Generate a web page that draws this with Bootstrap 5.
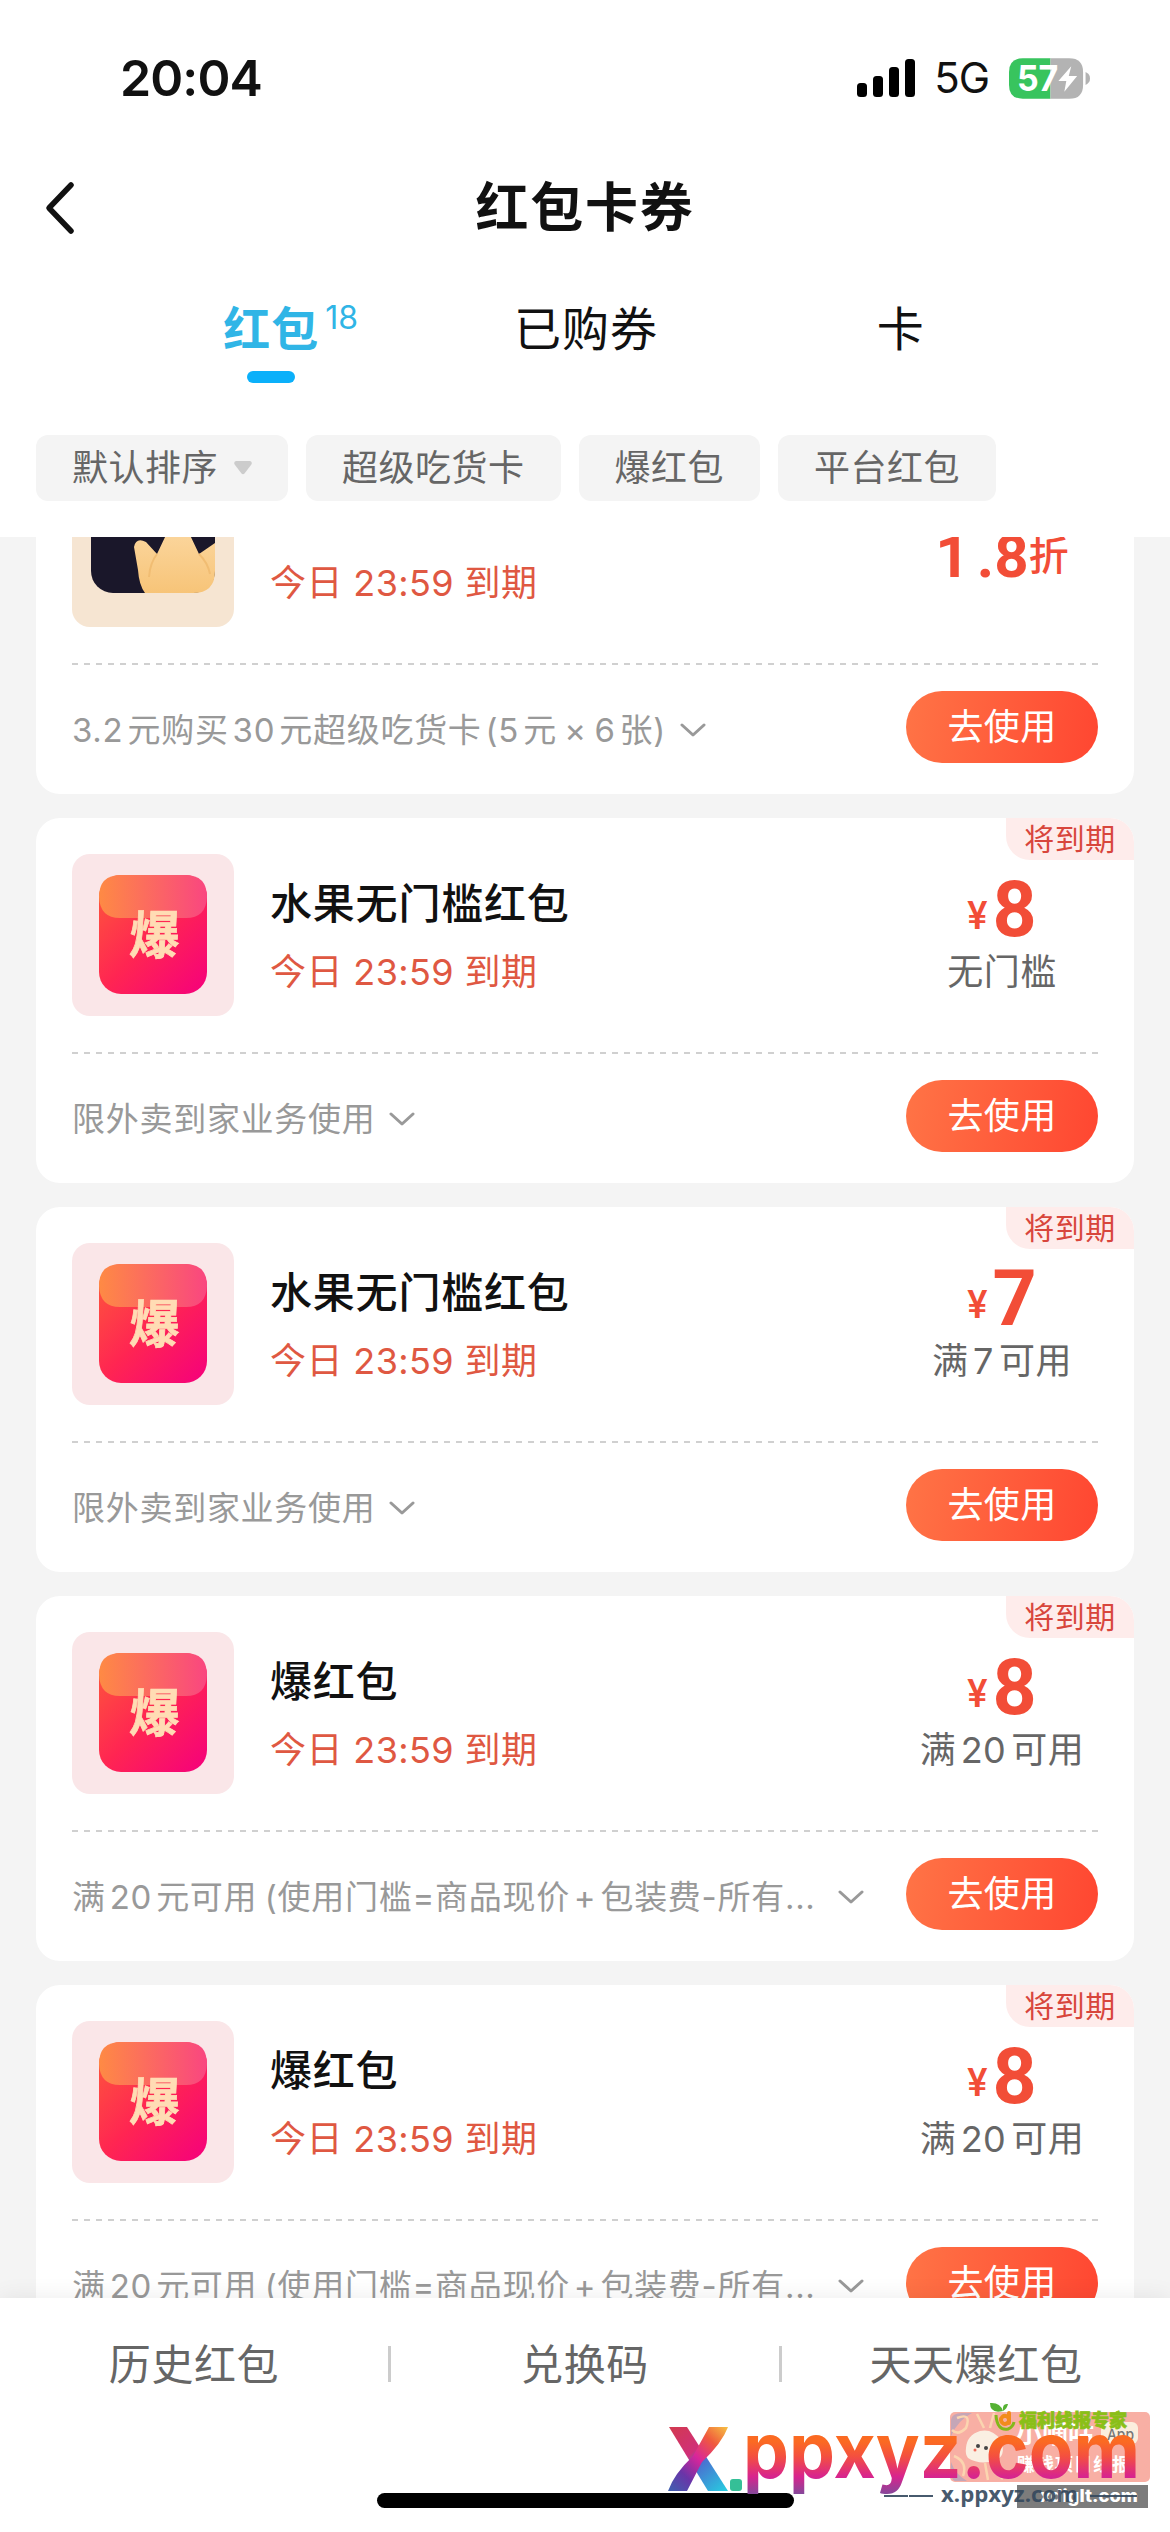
<!DOCTYPE html>
<html lang="zh-CN">
<head>
<meta charset="utf-8">
<meta name="viewport" content="width=device-width, initial-scale=1">
<title>红包卡券</title>
<link href="https://cdn.jsdelivr.net/npm/bootstrap@5.3.0/dist/css/bootstrap.min.css" rel="stylesheet">
<style>
body{font-family:Inter,"Noto Sans CJK SC",sans-serif;background:#f4f4f4;color:#111}
.screen{width:1170px;height:2532px}
.top-area{height:537px}
.status{height:116px;padding:38px 80px 0 120px}
.clock{font-size:50px;font-weight:600;line-height:80px;letter-spacing:-.9px}
.net{font-size:42px;line-height:80px;margin:0 20px 0 19px;letter-spacing:-1px}
.title-bar{height:183px}
.title-bar h1{font-size:53px;line-height:70px;font-weight:700;letter-spacing:1.8px}
.back{left:44px}
.tabs{padding:0 112px 0 114px;height:136px}
.tab{font-size:47px;line-height:60px;letter-spacing:1px}
.tab.on{color:#30b5e6;font-weight:700}
.tab .count{left:100%;top:-1px;font-size:32px;line-height:40px;margin-left:6px;font-weight:400;letter-spacing:0}
.tab .bar{left:24px;bottom:-24px;width:48px;height:12px;border-radius:6px;background:#0bb0fa}
.filters{padding:0 36px;gap:18px}
.chip{height:66px;border-radius:12px;background:#f4f4f4;color:#666;font-size:36px;letter-spacing:.5px;padding:0 36px}
.coupons{padding:0 36px;gap:24px}
.coupon{height:365px;border-radius:24px}
.coupon.first{margin-top:-108px}
.c-main{height:234px;padding:36px 36px 0}
.thumb{width:162px;height:162px;border-radius:18px;background:#fae6e8;overflow:hidden}
.thumb.gold{background:#f6e5d2}
.info{margin-left:36px;padding-top:20px}
.info h2{font-size:42px;line-height:60px;font-weight:500;letter-spacing:.8px;margin-bottom:14px;color:#111}
.expire{font-size:36px;line-height:48px;color:#df5842;letter-spacing:.4px;white-space:pre}
.value{width:192px;padding-top:26px}
.price{height:60px;color:#f24d37;font-family:Roboto,"Noto Sans CJK SC",sans-serif;font-weight:700;margin-bottom:8px}
.price .yen{font-size:38px;line-height:60px;padding-top:6px;margin-right:5px;font-weight:500}
.price .amt{font-size:77px;line-height:60px}
.price.off{padding-top:36px;line-height:60px;font-size:60px}
.price.off .one{letter-spacing:7px}
.price.off .unit{font-size:40px;font-weight:500}
.cond{font-size:36px;line-height:48px;color:#666;letter-spacing:.5px}
.num{margin:0 5px 0 4.5px}
.rule .num{margin:0 4px}
.dash{height:2px;margin:0 36px;background:repeating-linear-gradient(90deg,#d0d0d0 0 6px,transparent 6px 12px)}
.c-foot{height:129px;padding:0 36px}
.rule{font-size:33px;line-height:44px;color:#999;letter-spacing:.72px;white-space:pre;word-spacing:-2.5px}
.rule svg{margin-left:14px}
.rule .far{margin-left:auto;margin-right:42px}
.use{width:192px;height:72px;border-radius:36px;background:linear-gradient(100deg,#ff7446,#ff4631);color:#fff;font-size:36px;line-height:72px;padding:0;border:0;letter-spacing:.4px;margin-bottom:5px}
.soon{top:0;right:0;width:128px;height:42px;border-radius:0 24px 0 24px;background:#feeceb;color:#d8463c;font-size:30px;line-height:42px;letter-spacing:.5px}
.bottom-bar{height:234px;box-shadow:0 0 22px rgba(0,0,0,.08);z-index:2}
.bottom-bar .links{height:132px;font-size:42px;letter-spacing:.6px;color:#666}
.split{width:3px;height:36px;background:#ccc}
.home{width:417px;height:15px;border-radius:8px;background:#000;bottom:24px;left:377px}
.stamp{left:660px;bottom:0;width:510px;height:142px}
</style>
</head>
<body>
<svg width="0" height="0" class="position-absolute">
  <defs>
    <linearGradient id="gBox" x1="0" y1="0" x2="1" y2="1"><stop offset="0" stop-color="#fd5a3a"/><stop offset=".5" stop-color="#ff2552"/><stop offset="1" stop-color="#f5007c"/></linearGradient>
    <linearGradient id="gLid" x1="0" y1="0" x2="1" y2="0"><stop offset="0" stop-color="#fe8a44"/><stop offset="1" stop-color="#f94680"/></linearGradient>
    <linearGradient id="gHand" x1="0" y1="0" x2="0" y2="1"><stop offset="0" stop-color="#fbd59b"/><stop offset="1" stop-color="#f7c478"/></linearGradient>
    <symbol id="bao" viewBox="0 0 162 162">
      <rect x="27" y="21" width="108" height="119" rx="22" fill="url(#gBox)"/>
      <path d="M49 21H113Q135 21 135 43Q134 64 114 64H48Q28 64 27 43Q27 21 49 21Z" fill="url(#gLid)"/>
      <text x="57" y="100" font-size="52" font-weight="700" fill="#ffdcb4" stroke="#ffdcb4" stroke-width=".8" textLength="50" lengthAdjust="spacingAndGlyphs" transform="translate(5 0) skewX(-3)" font-family="'Noto Sans CJK SC',sans-serif">爆</text>
    </symbol>
    <symbol id="down" viewBox="0 0 26 14"><path d="M2 2L13 12L24 2" fill="none" stroke="#999" stroke-width="3" stroke-linecap="round" stroke-linejoin="round"/></symbol>
  </defs>
</svg>
<div class="screen d-flex flex-column overflow-hidden position-relative">
  <header class="top-area bg-white flex-shrink-0 position-relative">
    <div class="status d-flex justify-content-between align-items-start">
      <span class="clock">20:04</span>
      <div class="d-flex align-items-center">
        <svg width="58" height="38" viewBox="0 0 58 38"><rect y="24" width="10" height="14" rx="3.500"/><rect x="16" y="17" width="10" height="21" rx="3.500"/><rect x="32" y="8" width="10" height="30" rx="3.500"/><rect x="48" y="0" width="10" height="38" rx="3.500"/></svg>
        <span class="net">5G</span>
        <svg width="81" height="41" viewBox="0 0 82 41"><path d="M14 0H42V41H14Q0 41 0 27V14Q0 0 14 0Z" fill="#38c45e"/><path d="M42 0H61Q75 0 75 14V27Q75 41 61 41H42Z" fill="#b3b3b3"/><path d="M77.500 14Q82 16 82 20.500Q82 25 77.500 27Z" fill="#b3b3b3"/><text x="8" y="33" font-size="36" font-weight="700" fill="#fff" textLength="42" lengthAdjust="spacingAndGlyphs" font-family="Inter,sans-serif">57</text><path d="M63 8L50 23H58L56 34L69 18H60.500Z" fill="#fff"/></svg>
      </div>
    </div>
    <div class="title-bar d-flex align-items-center justify-content-center position-relative">
      <svg class="back position-absolute" width="32" height="54" viewBox="0 0 32 54"><path d="M27 4L5 27L27 50" fill="none" stroke="#111" stroke-width="5.500" stroke-linecap="round" stroke-linejoin="round"/></svg>
      <h1 class="m-0">红包卡券</h1>
    </div>
    <nav class="tabs d-flex text-center">
      <div class="col-4"><span class="tab on position-relative d-inline-block">红包<span class="count position-absolute">18</span><span class="bar position-absolute"></span></span></div>
      <div class="col-4"><span class="tab">已购券</span></div>
      <div class="col-4"><span class="tab">卡</span></div>
    </nav>
    <div class="filters d-flex">
      <div class="chip d-flex align-items-center">默认排序<svg class="ms-3" width="18" height="14" viewBox="0 0 18 14"><path d="M2 0H16Q19 1 17 4L10.500 12.500Q9 14 7.500 12.500L1 4Q-1 1 2 0Z" fill="#ccc"/></svg></div>
      <div class="chip d-flex align-items-center">超级吃货卡</div>
      <div class="chip d-flex align-items-center">爆红包</div>
      <div class="chip d-flex align-items-center">平台红包</div>
    </div>
  </header>

  <main class="coupons d-flex flex-column flex-grow-1 overflow-hidden">
    <section class="coupon first bg-white flex-shrink-0">
      <div class="c-main d-flex">
        <div class="thumb gold flex-shrink-0"><svg width="162" height="162" viewBox="0 0 162 162"><rect x="19" y="10" width="124" height="118" rx="22" fill="#1a172a"/><path d="M73 128Q67 120 66 105L62 82Q64 72 74 77L85 89L94 70H118L127 89L143 78V106Q143 128 121 128Z" fill="url(#gHand)"/><path d="M85 89Q78 98 77 112M127 89Q136 98 138 109" stroke="#f1bd73" stroke-width="2" fill="none"/></svg></div>
        <div class="info flex-grow-1 d-flex flex-column justify-content-start"><div class="expire" style="margin-top:74px">今日 23:59 到期</div></div>
        <div class="value"><div class="price off d-flex justify-content-center"><span class="one">1</span><span>.8</span><span class="unit">折</span></div></div>
      </div>
      <div class="dash"></div>
      <div class="c-foot d-flex align-items-center justify-content-between">
        <div class="rule d-flex align-items-center"><span>3.2<span class="ms-1"></span>元购买<span class="num">30</span>元超级吃货卡<span class="ms-1"></span>(5<span class="ms-1"></span>元 × 6<span class="ms-1"></span>张)</span><svg width="26" height="14"><use href="#down"/></svg></div>
        <button class="use btn">去使用</button>
      </div>
    </section>

    <section class="coupon bg-white flex-shrink-0 position-relative">
      <span class="soon position-absolute text-center">将到期</span>
      <div class="c-main d-flex">
        <div class="thumb flex-shrink-0"><svg width="162" height="162"><use href="#bao"/></svg></div>
        <div class="info flex-grow-1"><h2>水果无门槛红包</h2><div class="expire">今日 23:59 到期</div></div>
        <div class="value text-center"><div class="price d-flex justify-content-center"><span class="yen">¥</span><span class="amt">8</span></div><div class="cond">无门槛</div></div>
      </div>
      <div class="dash"></div>
      <div class="c-foot d-flex align-items-center justify-content-between">
        <div class="rule d-flex align-items-center"><span>限外卖到家业务使用</span><svg width="26" height="14"><use href="#down"/></svg></div>
        <button class="use btn">去使用</button>
      </div>
    </section>

    <section class="coupon bg-white flex-shrink-0 position-relative">
      <span class="soon position-absolute text-center">将到期</span>
      <div class="c-main d-flex">
        <div class="thumb flex-shrink-0"><svg width="162" height="162"><use href="#bao"/></svg></div>
        <div class="info flex-grow-1"><h2>水果无门槛红包</h2><div class="expire">今日 23:59 到期</div></div>
        <div class="value text-center"><div class="price d-flex justify-content-center"><span class="yen">¥</span><span class="amt">7</span></div><div class="cond">满<span class="num">7</span>可用</div></div>
      </div>
      <div class="dash"></div>
      <div class="c-foot d-flex align-items-center justify-content-between">
        <div class="rule d-flex align-items-center"><span>限外卖到家业务使用</span><svg width="26" height="14"><use href="#down"/></svg></div>
        <button class="use btn">去使用</button>
      </div>
    </section>

    <section class="coupon bg-white flex-shrink-0 position-relative">
      <span class="soon position-absolute text-center">将到期</span>
      <div class="c-main d-flex">
        <div class="thumb flex-shrink-0"><svg width="162" height="162"><use href="#bao"/></svg></div>
        <div class="info flex-grow-1"><h2>爆红包</h2><div class="expire">今日 23:59 到期</div></div>
        <div class="value text-center"><div class="price d-flex justify-content-center"><span class="yen">¥</span><span class="amt">8</span></div><div class="cond">满<span class="num">20</span>可用</div></div>
      </div>
      <div class="dash"></div>
      <div class="c-foot d-flex align-items-center justify-content-between">
        <div class="rule d-flex align-items-center flex-grow-1"><span>满<span class="num">20</span>元可用 (使用门槛=商品现价<span class="num">+</span>包装费-所有...</span><svg class="far" width="26" height="14"><use href="#down"/></svg></div>
        <button class="use btn">去使用</button>
      </div>
    </section>

    <section class="coupon bg-white flex-shrink-0 position-relative">
      <span class="soon position-absolute text-center">将到期</span>
      <div class="c-main d-flex">
        <div class="thumb flex-shrink-0"><svg width="162" height="162"><use href="#bao"/></svg></div>
        <div class="info flex-grow-1"><h2>爆红包</h2><div class="expire">今日 23:59 到期</div></div>
        <div class="value text-center"><div class="price d-flex justify-content-center"><span class="yen">¥</span><span class="amt">8</span></div><div class="cond">满<span class="num">20</span>可用</div></div>
      </div>
      <div class="dash"></div>
      <div class="c-foot d-flex align-items-center justify-content-between">
        <div class="rule d-flex align-items-center flex-grow-1"><span>满<span class="num">20</span>元可用 (使用门槛=商品现价<span class="num">+</span>包装费-所有...</span><svg class="far" width="26" height="14"><use href="#down"/></svg></div>
        <button class="use btn">去使用</button>
      </div>
    </section>
  </main>

  <footer class="bottom-bar bg-white flex-shrink-0 position-relative">
    <div class="links d-flex align-items-center text-center">
      <span class="flex-fill w-100">历史红包</span><span class="split flex-shrink-0"></span>
      <span class="flex-fill w-100">兑换码</span><span class="split flex-shrink-0"></span>
      <span class="flex-fill w-100">天天爆红包</span>
    </div>
    <div class="home position-absolute"></div>
    <svg class="stamp position-absolute" viewBox="660 2390 510 142">
      <defs>
        <linearGradient id="gWord" gradientUnits="userSpaceOnUse" x1="0" y1="2436" x2="0" y2="2494"><stop offset=".1" stop-color="#fb6a22"/><stop offset=".35" stop-color="#f4503f"/><stop offset=".7" stop-color="#d8248e"/><stop offset="1" stop-color="#85489a"/></linearGradient>
        <linearGradient id="gA" gradientUnits="userSpaceOnUse" x1="670" y1="2427" x2="725" y2="2491"><stop offset="0" stop-color="#d23a50"/><stop offset=".4" stop-color="#d02f79"/><stop offset=".56" stop-color="#4a6fd0"/><stop offset="1" stop-color="#28cbe0"/></linearGradient>
        <linearGradient id="gB" gradientUnits="userSpaceOnUse" x1="728" y1="2427" x2="670" y2="2491"><stop offset="0" stop-color="#f6c243"/><stop offset=".25" stop-color="#f05a3c"/><stop offset=".5" stop-color="#d9259a"/><stop offset=".75" stop-color="#6a35a8"/><stop offset="1" stop-color="#3f5fb0"/></linearGradient>
      </defs>
      <g font-family="'Noto Sans CJK SC',sans-serif" font-weight="700">
        <rect x="950" y="2412" width="200" height="70" rx="5" fill="#f8afa4"/>
        <path d="M951 2436V2420Q952 2413 962 2413H972Q958 2420 951 2436ZM951 2462Q955 2474 967 2481H955Q950 2480 951 2462Z" fill="#c5a6b7"/>
        <path d="M957 2418Q972 2412 966 2428Q958 2436 952 2430M977 2414L984 2428M994 2413L990 2428M954 2456Q968 2462 963 2476M985 2463L988 2480M995 2462Q994 2473 1003 2479" stroke="#fbd5b0" stroke-width="2.500" fill="none"/>
        <path d="M966 2448Q967 2435 980 2431Q992 2428 1001 2440Q1007 2457 994 2461Q979 2465 968 2458Q965 2454 966 2448Z" fill="#faefe2"/>
        <circle cx="978" cy="2446" r="2" fill="#444"/><circle cx="986" cy="2448" r="2" fill="#444"/><circle cx="975" cy="2450" r="1.500" fill="#ef6b5b"/>
        <text x="1016" y="2443" font-size="26" fill="#fff" textLength="78">小嘀咕</text>
        <rect x="1101" y="2422" width="37" height="22" rx="6" fill="#fbeedd"/>
        <text x="1107" y="2440" font-size="15" fill="#777" textLength="27" lengthAdjust="spacingAndGlyphs" font-family="Inter,sans-serif" font-weight="500">App</text>
        <text x="1017" y="2471" font-size="18" fill="#fff" textLength="113">赚钱项目线报</text>
        <path d="M1003 2411Q990 2414 990 2403Q1000 2402 1003 2411ZM1003 2411Q1002 2403 1008 2404Q1007 2409 1003 2411Z" fill="#55b233"/>
        <path d="M996 2415Q997 2431 1008 2429Q1013 2427 1014 2422" fill="none" stroke="#83b81a" stroke-width="3"/>
        <path d="M1009 2413V2423M1009 2420A4 4 0 1 1 1008.900 2419" fill="none" stroke="#f28c1c" stroke-width="4" stroke-linecap="round"/>
        <text x="1019" y="2427" font-size="18" font-weight="900" fill="#8abf18" stroke="#8abf18" stroke-width=".7" textLength="108">福利线报专家</text>
      </g>
      <path d="M669 2427H687L728 2491H708Z" fill="url(#gA)"/>
      <path d="M709 2427H728Q722 2443 702 2462L687 2491H668Q674 2474 693 2456Z" fill="url(#gB)"/>
      <rect x="730" y="2479" width="12" height="12" rx="3" fill="#35bf97"/>
      <text x="743" y="2478" font-family="Inter,sans-serif" font-size="77" font-weight="700" fill="url(#gWord)" textLength="397" lengthAdjust="spacingAndGlyphs">ppxyz.com</text>
      <rect x="1017" y="2485" width="131" height="23" fill="#7c7c7c"/>
      <text x="1040" y="2502" font-family="Inter,sans-serif" font-size="17" font-weight="800" fill="#fff" textLength="98" lengthAdjust="spacingAndGlyphs">xdiglt.com</text>
      <g fill="#34495e" font-family="'Open Sans','Noto Sans',sans-serif" font-weight="700" opacity=".9">
        <path d="M884 2496H908M909 2496H933M1090 2496H1137" stroke="#34495e" stroke-width="1.800"/>
        <text x="941" y="2502" font-size="21" textLength="137" lengthAdjust="spacingAndGlyphs">x.ppxyz.com</text>
      </g>
    </svg>
  </footer>
</div>
<script src="https://cdn.jsdelivr.net/npm/bootstrap@5.3.0/dist/js/bootstrap.bundle.min.js"></script>
</body>
</html>
